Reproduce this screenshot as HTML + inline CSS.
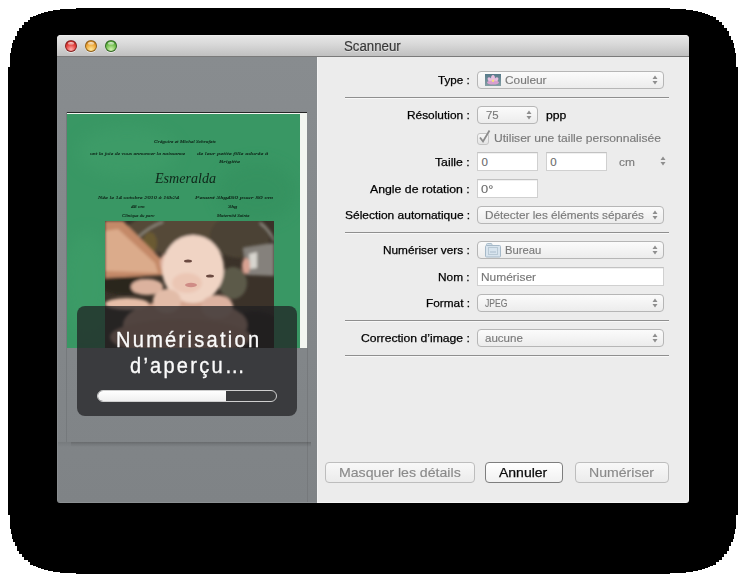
<!DOCTYPE html>
<html><head><meta charset="utf-8">
<style>
html,body{margin:0;padding:0;background:#fff;width:746px;height:582px;overflow:hidden;position:relative;font-family:"Liberation Sans",sans-serif;}
.b{position:absolute;}
.tx{position:absolute;white-space:nowrap;transform-origin:0 0;}
</style></head><body>
<svg class="b" style="left:0;top:0" width="746" height="582"><path d="M8,67 L10,67 L10,53 L11,53 L11,48 L12,48 L12,43 L13,43 L13,40 L15,40 L15,36 L17,36 L17,31 L19,31 L19,28 L22,28 L22,25 L24,25 L24,22 L27.5,22 L27.5,20 L30,20 L30,17 L33,17 L33,16 L36,16 L36,15 L38,15 L38,14 L41,14 L41,13 L44,13 L44,12 L48,12 L48,11 L53,11 L53,10 L60,10 L60,9 L76,9 L76,8 L670,8 L670,9 L686,9 L686,10 L693,10 L693,11 L698,11 L698,12 L702,12 L702,13 L705,13 L705,14 L708,14 L708,15 L710,15 L710,16 L713,16 L713,17 L716,17 L716,20 L718.5,20 L718.5,22 L722,22 L722,25 L724,25 L724,28 L727,28 L727,31 L729,31 L729,36 L731,36 L731,40 L733,40 L733,43 L734,43 L734,48 L735,48 L735,53 L736,53 L736,67 L738,67 L738,515 L736,515 L736,529 L735,529 L735,534 L734,534 L734,539 L733,539 L733,542 L731,542 L731,546 L729,546 L729,551 L727,551 L727,554 L724,554 L724,557 L722,557 L722,560 L718.5,560 L718.5,562 L716,562 L716,565 L713,565 L713,566 L710,566 L710,567 L708,567 L708,568 L705,568 L705,569 L702,569 L702,570 L698,570 L698,571 L693,571 L693,572 L686,572 L686,573 L670,573 L670,574 L76,574 L76,573 L60,573 L60,572 L53,572 L53,571 L48,571 L48,570 L44,570 L44,569 L41,569 L41,568 L38,568 L38,567 L36,567 L36,566 L33,566 L33,565 L30,565 L30,562 L27.5,562 L27.5,560 L24,560 L24,557 L22,557 L22,554 L19,554 L19,551 L17,551 L17,546 L15,546 L15,542 L13,542 L13,539 L12,539 L12,534 L11,534 L11,529 L10,529 L10,515 L8,515 Z" fill="#000" shape-rendering="crispEdges"/></svg>
<div class="b" style="left:57px;top:35px;width:632px;height:468px;background:#ececec;border-radius:4px 4px 1px 1px;"></div>
<div class="b" style="left:57px;top:35px;width:632px;height:21px;background:linear-gradient(#f4f4f4 0,#e6e6e6 1px,#d8d8d8 45%,#c0c0c0);border-radius:4px 4px 0 0;"></div>
<div class="b" style="left:57px;top:56px;width:632px;height:1px;background:#7a7a7a;"></div>
<div class="b" style="left:65px;top:40px;width:12px;height:12px;border-radius:50%;box-sizing:border-box;border:1px solid rgba(110,20,20,0.75);background:radial-gradient(circle at 50% 85%,#ffb0ac 0,#e3403c 55%,#b02520 100%);box-shadow:0 1px 0 rgba(255,255,255,0.5);"></div>
<div class="b" style="left:68px;top:41.5px;width:6px;height:3px;border-radius:50%;background:linear-gradient(rgba(255,255,255,0.85),rgba(255,255,255,0.2));"></div>
<div class="b" style="left:85px;top:40px;width:12px;height:12px;border-radius:50%;box-sizing:border-box;border:1px solid rgba(120,75,10,0.75);background:radial-gradient(circle at 50% 85%,#ffe89a 0,#eea83a 55%,#b87420 100%);box-shadow:0 1px 0 rgba(255,255,255,0.5);"></div>
<div class="b" style="left:88px;top:41.5px;width:6px;height:3px;border-radius:50%;background:linear-gradient(rgba(255,255,255,0.85),rgba(255,255,255,0.2));"></div>
<div class="b" style="left:105px;top:40px;width:12px;height:12px;border-radius:50%;box-sizing:border-box;border:1px solid rgba(30,80,20,0.75);background:radial-gradient(circle at 50% 85%,#d2f2b0 0,#72bf4e 55%,#3f8c2a 100%);box-shadow:0 1px 0 rgba(255,255,255,0.5);"></div>
<div class="b" style="left:108px;top:41.5px;width:6px;height:3px;border-radius:50%;background:linear-gradient(rgba(255,255,255,0.85),rgba(255,255,255,0.2));"></div>
<div class="b" style="left:57px;top:57px;width:260px;height:446px;background:linear-gradient(#888c8f,#7f8386);"></div>
<div class="b" style="left:66px;top:112px;width:1px;height:330px;background:#75797c;"></div>
<div class="b" style="left:307px;top:348px;width:1px;height:155px;background:#76797c;"></div>
<div class="b" style="left:57px;top:442px;width:14px;height:5px;background:linear-gradient(rgba(0,0,0,0.08),rgba(0,0,0,0));"></div>
<div class="b" style="left:71px;top:442px;width:240px;height:5px;background:linear-gradient(rgba(0,0,0,0.2),rgba(0,0,0,0.1) 40%,rgba(0,0,0,0));"></div>
<div class="b" style="left:317px;top:57px;width:1px;height:446px;background:#f3f3f3;"></div>
<div class="b" style="left:58px;top:502px;width:259px;height:1px;background:#8c9093;"></div>
<div class="b" style="left:317px;top:502px;width:370px;height:1px;background:#f7f7f7;"></div>
<div class="b" style="left:57px;top:57px;width:1px;height:444px;background:#898d90;"></div>
<div class="b" style="left:688px;top:57px;width:1px;height:444px;background:#f5f5f5;"></div>
<svg class="b" style="left:0;top:0" width="746" height="582"><path d="M57,500 L57,503 L60,503 Q57,503 57,500 Z M689,500 L689,503 L686,503 Q689,503 689,500 Z" fill="#000"/></svg>

<div class="b" style="left:67px;top:112px;width:240px;height:236px;background:#f3f6f1;overflow:hidden">
 <div class="b" style="left:0;top:0;width:240px;height:1px;background:#262626"></div>
 <div class="b" style="left:0;top:2px;width:233px;height:234px;background:#399764;"></div>
 <svg class="b" style="left:0;top:0" width="240" height="236">
  <defs>
   <filter id="bl" x="-50%" y="-50%" width="200%" height="200%"><feGaussianBlur stdDeviation="8"/></filter>
   <filter id="bl2"><feGaussianBlur stdDeviation="1.5"/></filter><filter id="bl3"><feGaussianBlur stdDeviation="0.6"/></filter>
   <clipPath id="pc"><rect x="0" y="0" width="169" height="127"/></clipPath>
   <clipPath id="gc"><rect x="0" y="2" width="233" height="234"/></clipPath>
  </defs>
  <g clip-path="url(#gc)"><g filter="url(#bl)" opacity="0.45">
   <ellipse cx="60" cy="40" rx="50" ry="25" fill="#42a06c"/>
   <ellipse cx="190" cy="80" rx="40" ry="30" fill="#338d5c"/>
   <ellipse cx="20" cy="170" rx="25" ry="50" fill="#40a06b"/>
  </g></g>
  <g transform="translate(38,109)" clip-path="url(#pc)">
   <rect x="0" y="0" width="169" height="127" fill="#3b3229"/>
   <g filter="url(#bl2)">
   <ellipse cx="80" cy="12" rx="60" ry="22" fill="#544a38"/>
   <ellipse cx="135" cy="15" rx="30" ry="22" fill="#4b4234"/>
   <ellipse cx="45" cy="22" rx="7" ry="11" fill="#6a5a32"/>
   <ellipse cx="128" cy="62" rx="14" ry="16" fill="#5c5a4a"/>
   <ellipse cx="150" cy="112" rx="30" ry="22" fill="#2a241e"/>
   <ellipse cx="20" cy="64" rx="25" ry="10" fill="#2c261f"/>
   <path d="M31,18 Q45,5 58,1" stroke="#9d998e" stroke-width="1.6" fill="none"/>
   <path d="M155,2 Q166,10 169,20" stroke="#9a978f" stroke-width="1.6" fill="none"/>
   <path d="M0,0 L18,0 L57,39 L61,54 L0,57 Z" fill="#c48968"/>
   <path d="M0,10 L13,8 L50,42 L53,52 L0,50 Z" fill="#dbab8b"/>
   <ellipse cx="80" cy="104" rx="62" ry="26" fill="#d4a690"/>
   <ellipse cx="75" cy="116" rx="70" ry="18" fill="#cc9c86"/>
   <ellipse cx="22" cy="83" rx="22" ry="6" fill="#e6bea8"/>
   <ellipse cx="42" cy="66" rx="16" ry="8" fill="#dcb29e"/>
   <ellipse cx="60" cy="42" rx="5" ry="9" fill="#dcae9c"/>
   <ellipse cx="88" cy="48" rx="31" ry="34" fill="#f0d4c4"/>
   <ellipse cx="82" cy="62" rx="15" ry="10" fill="#e8bcaa" opacity="0.6"/>
   <ellipse cx="62" cy="80" rx="14" ry="12" fill="#e2bca8"/>
   <ellipse cx="112" cy="86" rx="16" ry="12" fill="#dcb2a0"/>
   <path d="M138,27 L169,22 L169,55 L142,54 Z" fill="#85817b"/>
   <path d="M144,33 L152,31 L152,47 L145,48 Z" fill="#d8d5cf"/>
   <ellipse cx="141" cy="45" rx="4" ry="8" fill="#d9a292"/>
   </g>
   <g filter="url(#bl3)">
   <ellipse cx="83" cy="40" rx="4" ry="1.6" fill="#6a4a40"/>
   <ellipse cx="105" cy="55" rx="4" ry="1.6" fill="#6a4a40"/>
   <ellipse cx="86" cy="64" rx="6" ry="2.2" fill="#cf8c86"/>
   </g>
  </g>
 </svg>
</div>

<div class="tx" style="left:154.00px;top:139.00px;font-family:'Liberation Serif';font-style:italic;font-size:5px;line-height:5px;color:#0f2619;transform:scaleX(1.0681);letter-spacing:0.000px;-webkit-text-stroke:0.12px #0f2619;">Grégoire et Michel Schrafetz</div>
<div class="tx" style="left:90.00px;top:151.00px;font-family:'Liberation Serif';font-style:italic;font-size:5px;line-height:5px;color:#0f2619;transform:scaleX(1.1472);letter-spacing:0.000px;-webkit-text-stroke:0.12px #0f2619;">ont la joie de vous annoncer la naissance</div>
<div class="tx" style="left:197.00px;top:151.00px;font-family:'Liberation Serif';font-style:italic;font-size:5px;line-height:5px;color:#0f2619;transform:scaleX(1.3141);letter-spacing:0.000px;-webkit-text-stroke:0.12px #0f2619;">de leur petite fille adorée à</div>
<div class="tx" style="left:219.00px;top:159.00px;font-family:'Liberation Serif';font-style:italic;font-size:5px;line-height:5px;color:#0f2619;transform:scaleX(1.3701);letter-spacing:0.000px;-webkit-text-stroke:0.12px #0f2619;">Brigitte</div>
<div class="tx" style="left:155.01px;top:172.00px;font-family:'Liberation Serif';font-style:italic;font-size:14px;line-height:14px;color:#0f2619;transform:scaleX(1.0055);letter-spacing:0.000px;">Esmeralda</div>
<div class="tx" style="left:98.27px;top:195.00px;font-family:'Liberation Serif';font-style:italic;font-size:5px;line-height:5px;color:#0f2619;transform:scaleX(1.2678);letter-spacing:0.000px;-webkit-text-stroke:0.12px #0f2619;">Née le 14 octobre 2010 à 16h24</div>
<div class="tx" style="left:195.45px;top:195.00px;font-family:'Liberation Serif';font-style:italic;font-size:5px;line-height:5px;color:#0f2619;transform:scaleX(1.4547);letter-spacing:0.000px;-webkit-text-stroke:0.12px #0f2619;">Pesant 3kg450 pour 50 cm</div>
<div class="tx" style="left:131.00px;top:204.00px;font-family:'Liberation Serif';font-style:italic;font-size:5px;line-height:5px;color:#0f2619;transform:scaleX(1.1228);letter-spacing:0.000px;-webkit-text-stroke:0.12px #0f2619;">48 cm</div>
<div class="tx" style="left:228.00px;top:204.00px;font-family:'Liberation Serif';font-style:italic;font-size:5px;line-height:5px;color:#0f2619;transform:scaleX(1.2955);letter-spacing:0.000px;-webkit-text-stroke:0.12px #0f2619;">3kg</div>
<div class="tx" style="left:122.00px;top:213.00px;font-family:'Liberation Serif';font-style:italic;font-size:5px;line-height:5px;color:#0f2619;transform:scaleX(0.9570);letter-spacing:0.000px;-webkit-text-stroke:0.12px #0f2619;">Clinique du parc</div>
<div class="tx" style="left:216.96px;top:213.00px;font-family:'Liberation Serif';font-style:italic;font-size:5px;line-height:5px;color:#0f2619;transform:scaleX(0.9647);letter-spacing:0.000px;-webkit-text-stroke:0.12px #0f2619;">Maternité Sainte</div>
<div class="b" style="left:77px;top:306px;width:220px;height:110px;background:rgba(30,31,33,0.72);border-radius:8px;"></div>
<div class="b" style="left:97px;top:390px;width:180px;height:12px;background:#3a3b3d;border:1px solid #cfcfcf;border-radius:6px;box-sizing:border-box;"></div>
<div class="b" style="left:98px;top:391px;width:128px;height:10px;background:linear-gradient(#ffffff,#f0f0f0);border-radius:5px 0 0 5px;"></div>
<div class="b" style="left:345px;top:97px;width:324px;height:1px;background:#8f8f8f;"></div>
<div class="b" style="left:345px;top:98px;width:324px;height:1px;background:#f8f8f8;"></div>
<div class="b" style="left:345px;top:232px;width:324px;height:1px;background:#8f8f8f;"></div>
<div class="b" style="left:345px;top:233px;width:324px;height:1px;background:#f8f8f8;"></div>
<div class="b" style="left:345px;top:320px;width:324px;height:1px;background:#8f8f8f;"></div>
<div class="b" style="left:345px;top:321px;width:324px;height:1px;background:#f8f8f8;"></div>
<div class="b" style="left:345px;top:355px;width:324px;height:1px;background:#8f8f8f;"></div>
<div class="b" style="left:345px;top:356px;width:324px;height:1px;background:#f8f8f8;"></div>
<div class="b" style="left:477px;top:71px;width:187px;height:18px;background:linear-gradient(#fbfbfb,#ececec);border:1px solid #b6b6b6;border-radius:4px;box-sizing:border-box;"></div>
<svg class="b" style="left:651.5px;top:75px" width="6" height="10"><path d="M3,0.5 L5.5,4 L0.5,4 Z M3,9.5 L5.5,6 L0.5,6 Z" fill="#8e8e8e"/></svg>
<div class="b" style="left:477px;top:106px;width:61px;height:18px;background:linear-gradient(#fbfbfb,#ececec);border:1px solid #b6b6b6;border-radius:4px;box-sizing:border-box;"></div>
<svg class="b" style="left:525.5px;top:110px" width="6" height="10"><path d="M3,0.5 L5.5,4 L0.5,4 Z M3,9.5 L5.5,6 L0.5,6 Z" fill="#8e8e8e"/></svg>
<div class="b" style="left:477px;top:152px;width:61px;height:19px;background:#fff;border:1px solid #d0d0d0;border-top-color:#c2c2c2;box-shadow:inset 0 1px 0 #f0f0f0;box-sizing:border-box;"></div>
<div class="b" style="left:546px;top:152px;width:61px;height:19px;background:#fff;border:1px solid #d0d0d0;border-top-color:#c2c2c2;box-shadow:inset 0 1px 0 #f0f0f0;box-sizing:border-box;"></div>
<svg class="b" style="left:659.5px;top:156px" width="6" height="10"><path d="M3,0.5 L5.5,4 L0.5,4 Z M3,9.5 L5.5,6 L0.5,6 Z" fill="#8e8e8e"/></svg>
<div class="b" style="left:477px;top:179px;width:61px;height:19px;background:#fff;border:1px solid #d0d0d0;border-top-color:#c2c2c2;box-shadow:inset 0 1px 0 #f0f0f0;box-sizing:border-box;"></div>
<div class="b" style="left:477px;top:206px;width:187px;height:18px;background:linear-gradient(#fbfbfb,#ececec);border:1px solid #b6b6b6;border-radius:4px;box-sizing:border-box;"></div>
<svg class="b" style="left:651.5px;top:210px" width="6" height="10"><path d="M3,0.5 L5.5,4 L0.5,4 Z M3,9.5 L5.5,6 L0.5,6 Z" fill="#8e8e8e"/></svg>
<div class="b" style="left:477px;top:241px;width:187px;height:18px;background:linear-gradient(#fbfbfb,#ececec);border:1px solid #b6b6b6;border-radius:4px;box-sizing:border-box;"></div>
<svg class="b" style="left:651.5px;top:245px" width="6" height="10"><path d="M3,0.5 L5.5,4 L0.5,4 Z M3,9.5 L5.5,6 L0.5,6 Z" fill="#8e8e8e"/></svg>
<div class="b" style="left:477px;top:267px;width:187px;height:19px;background:#fff;border:1px solid #d0d0d0;border-top-color:#c2c2c2;box-shadow:inset 0 1px 0 #f0f0f0;box-sizing:border-box;"></div>
<div class="b" style="left:477px;top:294px;width:187px;height:18px;background:linear-gradient(#fbfbfb,#ececec);border:1px solid #b6b6b6;border-radius:4px;box-sizing:border-box;"></div>
<svg class="b" style="left:651.5px;top:298px" width="6" height="10"><path d="M3,0.5 L5.5,4 L0.5,4 Z M3,9.5 L5.5,6 L0.5,6 Z" fill="#8e8e8e"/></svg>
<div class="b" style="left:477px;top:329px;width:187px;height:18px;background:linear-gradient(#fbfbfb,#ececec);border:1px solid #b6b6b6;border-radius:4px;box-sizing:border-box;"></div>
<svg class="b" style="left:651.5px;top:333px" width="6" height="10"><path d="M3,0.5 L5.5,4 L0.5,4 Z M3,9.5 L5.5,6 L0.5,6 Z" fill="#8e8e8e"/></svg>
<div class="b" style="left:477px;top:133px;width:12px;height:12px;background:linear-gradient(#f7f7f7,#e4e4e4);border:1px solid #c4c4c4;border-radius:3px;box-sizing:border-box;"></div>
<svg class="b" style="left:477px;top:129px" width="16" height="16"><path d="M3,8.5 L6,12.5 L12.5,1.5" stroke="#8c8c8c" stroke-width="1.8" fill="none"/></svg>
<svg class="b" style="left:485px;top:74px" width="16" height="12"><defs><linearGradient id="lg" x1="0" y1="0" x2="0" y2="1"><stop offset="0" stop-color="#587a8a"/><stop offset="1" stop-color="#86a0a6"/></linearGradient></defs><rect width="16" height="12" fill="url(#lg)"/><g fill="#e8bfe0"><ellipse cx="8" cy="4.5" rx="2" ry="3.5"/><ellipse cx="5" cy="6" rx="1.8" ry="3" transform="rotate(-35 5 6)"/><ellipse cx="11" cy="6" rx="1.8" ry="3" transform="rotate(35 11 6)"/><ellipse cx="8" cy="8.5" rx="6" ry="2" fill="#d9a0cf"/></g><circle cx="8" cy="6.8" r="1.2" fill="#f4e27a"/></svg>
<svg class="b" style="left:485px;top:242px" width="17" height="16"><rect x="1.5" y="1.5" width="5.5" height="3" rx="1" fill="#d3dfe9" stroke="#abbecc"/><rect x="0.5" y="3.5" width="15" height="11.5" rx="1" fill="#d8e4ee" stroke="#a6b9c8"/><rect x="3.5" y="5.5" width="9" height="7" fill="none" stroke="#b9c9d5"/><rect x="5" y="9.5" width="6" height="1" fill="#a9bccb"/></svg>
<div class="b" style="left:325px;top:462px;width:150px;height:21px;background:linear-gradient(#f8f8f8,#ebebeb);border:1px solid #bdbdbd;border-radius:4px;box-sizing:border-box;"></div>
<div class="b" style="left:485px;top:462px;width:78px;height:21px;background:linear-gradient(#ffffff,#f1f1f1);border:1px solid #7e7e7e;border-radius:4px;box-sizing:border-box;"></div>
<div class="b" style="left:575px;top:462px;width:94px;height:21px;background:linear-gradient(#f8f8f8,#ebebeb);border:1px solid #bdbdbd;border-radius:4px;box-sizing:border-box;"></div>
<div class="tx" style="left:344.00px;top:39.00px;font-family:'Liberation Sans';font-size:14px;line-height:14px;color:#383838;transform:scaleX(0.9458);letter-spacing:0.000px;-webkit-text-stroke:0.2px #383838;text-shadow:0 1px 0 rgba(255,255,255,0.45);">Scanneur</div>
<div class="tx" style="left:437.80px;top:75.00px;font-family:'Liberation Sans';font-size:11.5px;line-height:11.5px;color:#000000;transform:scaleX(1.0120);letter-spacing:0.000px;-webkit-text-stroke:0.25px #000;">Type :</div>
<div class="tx" style="left:407.00px;top:110.00px;font-family:'Liberation Sans';font-size:11.5px;line-height:11.5px;color:#000000;transform:scaleX(1.0325);letter-spacing:0.000px;-webkit-text-stroke:0.25px #000;">Résolution :</div>
<div class="tx" style="left:435.00px;top:157.00px;font-family:'Liberation Sans';font-size:11.5px;line-height:11.5px;color:#000000;transform:scaleX(1.0648);letter-spacing:0.000px;-webkit-text-stroke:0.25px #000;">Taille :</div>
<div class="tx" style="left:370.00px;top:184.00px;font-family:'Liberation Sans';font-size:11.5px;line-height:11.5px;color:#000000;transform:scaleX(1.0682);letter-spacing:0.000px;-webkit-text-stroke:0.25px #000;">Angle de rotation :</div>
<div class="tx" style="left:344.50px;top:210.00px;font-family:'Liberation Sans';font-size:11.5px;line-height:11.5px;color:#000000;transform:scaleX(1.0417);letter-spacing:0.000px;-webkit-text-stroke:0.25px #000;">Sélection automatique :</div>
<div class="tx" style="left:382.90px;top:245.00px;font-family:'Liberation Sans';font-size:11.5px;line-height:11.5px;color:#000000;transform:scaleX(1.0279);letter-spacing:0.000px;-webkit-text-stroke:0.25px #000;">Numériser vers :</div>
<div class="tx" style="left:438.00px;top:272.00px;font-family:'Liberation Sans';font-size:11.5px;line-height:11.5px;color:#000000;transform:scaleX(1.0303);letter-spacing:0.000px;-webkit-text-stroke:0.25px #000;">Nom :</div>
<div class="tx" style="left:425.60px;top:298.00px;font-family:'Liberation Sans';font-size:11.5px;line-height:11.5px;color:#000000;transform:scaleX(1.0278);letter-spacing:0.000px;-webkit-text-stroke:0.25px #000;">Format :</div>
<div class="tx" style="left:360.80px;top:333.00px;font-family:'Liberation Sans';font-size:11.5px;line-height:11.5px;color:#000000;transform:scaleX(1.0573);letter-spacing:0.000px;-webkit-text-stroke:0.25px #000;">Correction d’image :</div>
<div class="tx" style="left:505.00px;top:75.00px;font-family:'Liberation Sans';font-size:11.5px;line-height:11.5px;color:#7a7a7a;transform:scaleX(1.0311);letter-spacing:0.000px;-webkit-text-stroke:0.15px #7a7a7a;">Couleur</div>
<div class="tx" style="left:485.70px;top:110.00px;font-family:'Liberation Sans';font-size:11.5px;line-height:11.5px;color:#7a7a7a;transform:scaleX(0.9923);letter-spacing:0.000px;-webkit-text-stroke:0.15px #7a7a7a;">75</div>
<div class="tx" style="left:545.50px;top:110.00px;font-family:'Liberation Sans';font-size:11.5px;line-height:11.5px;color:#000000;transform:scaleX(1.0643);letter-spacing:0.000px;-webkit-text-stroke:0.25px #000;">ppp</div>
<div class="tx" style="left:494.30px;top:133.00px;font-family:'Liberation Sans';font-size:11.5px;line-height:11.5px;color:#7a7a7a;transform:scaleX(1.0487);letter-spacing:0.000px;-webkit-text-stroke:0.15px #7a7a7a;">Utiliser une taille personnalisée</div>
<div class="tx" style="left:481.40px;top:157.00px;font-family:'Liberation Sans';font-size:11.5px;line-height:11.5px;color:#6a6a6a;transform:scaleX(1.0000);letter-spacing:0.000px;-webkit-text-stroke:0.15px #7a7a7a;">0</div>
<div class="tx" style="left:550.20px;top:157.00px;font-family:'Liberation Sans';font-size:11.5px;line-height:11.5px;color:#6a6a6a;transform:scaleX(1.0000);letter-spacing:0.000px;-webkit-text-stroke:0.15px #7a7a7a;">0</div>
<div class="tx" style="left:619.20px;top:157.00px;font-family:'Liberation Sans';font-size:11.5px;line-height:11.5px;color:#7a7a7a;transform:scaleX(1.0373);letter-spacing:0.000px;-webkit-text-stroke:0.15px #7a7a7a;">cm</div>
<div class="tx" style="left:481.40px;top:184.00px;font-family:'Liberation Sans';font-size:11.5px;line-height:11.5px;color:#6a6a6a;transform:scaleX(1.1158);letter-spacing:0.000px;-webkit-text-stroke:0.15px #7a7a7a;">0°</div>
<div class="tx" style="left:485.20px;top:210.00px;font-family:'Liberation Sans';font-size:11.5px;line-height:11.5px;color:#7a7a7a;transform:scaleX(1.0233);letter-spacing:0.000px;-webkit-text-stroke:0.15px #7a7a7a;">Détecter les éléments séparés</div>
<div class="tx" style="left:505.30px;top:245.00px;font-family:'Liberation Sans';font-size:11.5px;line-height:11.5px;color:#7a7a7a;transform:scaleX(0.9785);letter-spacing:0.000px;-webkit-text-stroke:0.15px #7a7a7a;">Bureau</div>
<div class="tx" style="left:480.90px;top:272.00px;font-family:'Liberation Sans';font-size:11.5px;line-height:11.5px;color:#777777;transform:scaleX(1.0375);letter-spacing:0.000px;-webkit-text-stroke:0.15px #7a7a7a;">Numériser</div>
<div class="tx" style="left:485.20px;top:298.00px;font-family:'Liberation Sans';font-size:11.5px;line-height:11.5px;color:#7a7a7a;transform:scaleX(0.7477);letter-spacing:0.000px;-webkit-text-stroke:0.15px #7a7a7a;">JPEG</div>
<div class="tx" style="left:485.20px;top:333.00px;font-family:'Liberation Sans';font-size:11.5px;line-height:11.5px;color:#7a7a7a;transform:scaleX(1.0045);letter-spacing:0.000px;-webkit-text-stroke:0.15px #7a7a7a;">aucune</div>
<div class="tx" style="left:338.69px;top:467.00px;font-family:'Liberation Sans';font-size:12.7px;line-height:12.7px;color:#8a8a8a;transform:scaleX(1.1134);letter-spacing:0.000px;-webkit-text-stroke:0.15px #8a8a8a;">Masquer les détails</div>
<div class="tx" style="left:499.30px;top:467.00px;font-family:'Liberation Sans';font-size:12.7px;line-height:12.7px;color:#0c0c0c;transform:scaleX(1.1032);letter-spacing:0.000px;-webkit-text-stroke:0.25px #0c0c0c;">Annuler</div>
<div class="tx" style="left:588.89px;top:467.00px;font-family:'Liberation Sans';font-size:12.7px;line-height:12.7px;color:#8a8a8a;transform:scaleX(1.1117);letter-spacing:0.000px;-webkit-text-stroke:0.15px #8a8a8a;">Numériser</div>
<div class="tx" style="left:116.09px;top:329.00px;font-family:'Liberation Sans';font-size:22px;line-height:22px;color:#fafafa;transform:scaleX(0.9100);letter-spacing:2.507px;-webkit-text-stroke:0.35px #fafafa;">Numérisation</div>
<div class="tx" style="left:130.00px;top:355.00px;font-family:'Liberation Sans';font-size:22px;line-height:22px;color:#fafafa;transform:scaleX(0.9100);letter-spacing:2.473px;-webkit-text-stroke:0.35px #fafafa;">d’aperçu…</div>
</body></html>
